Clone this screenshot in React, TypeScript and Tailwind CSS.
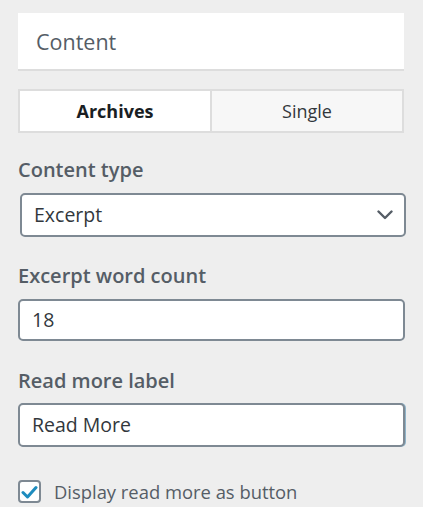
import { useState } from 'react'

const font = { fontFamily: '"Open Sans", "Noto Sans", sans-serif' }

function Label({ children, className = '' }: { children: React.ReactNode; className?: string }) {
  return (
    <div className={`h-6 text-[20px] leading-6 font-semibold text-[#555d66] ${className}`}>
      {children}
    </div>
  )
}

export default function App() {
  const [tab, setTab] = useState<'archives' | 'single'>('archives')
  const [checked, setChecked] = useState(true)

  return (
    <div className="min-h-[507px] w-[423px] bg-[#eeeeee] px-[18px] pt-[13px]" style={font}>
      {/* Section header */}
      <div className="flex h-[58px] w-[386px] items-center border-b-2 border-[#dddddd] bg-white pl-[18px] pt-[2px]">
        <span className="text-[21.5px] text-[#555d66]">Content</span>
      </div>

      {/* Tabs */}
      <div className="mt-[18px] flex h-[44px] w-[386px] border-2 border-[#dddddd]">
        <button
          onClick={() => setTab('archives')}
          className={`flex-1 border-r-2 border-[#dddddd] text-[18px] ${
            tab === 'archives' ? 'bg-white font-bold text-[#191e23]' : 'bg-[#f7f7f7] text-[#32373c]'
          }`}
        >
          Archives
        </button>
        <button
          onClick={() => setTab('single')}
          className={`flex-1 text-[18px] ${
            tab === 'single' ? 'bg-white font-bold text-[#191e23]' : 'bg-[#f7f7f7] text-[#32373c]'
          }`}
        >
          Single
        </button>
      </div>

      {/* Content type */}
      <Label className="mt-[25px]">Content type</Label>
      <div className="mt-[11px] ml-[2px] flex h-[44px] w-[386px] items-center justify-between rounded-[5px] border-2 border-[#7e8993] bg-white pl-[12px] pr-[11px]">
        <span className="text-[19.5px] text-[#32373c]">Excerpt</span>
        <svg width="16" height="10" viewBox="0 0 16 10" fill="none">
          <path d="M1.5 1.5 L8 8 L14.5 1.5" stroke="#555d66" strokeWidth="2.4" strokeLinecap="round" strokeLinejoin="round" />
        </svg>
      </div>

      {/* Excerpt word count */}
      <Label className="mt-[27px]">Excerpt word count</Label>
      <div className="mt-[11px] flex h-[42px] w-[387px] items-center rounded-[5px] border-2 border-[#7e8993] bg-white pl-[12px]">
        <span className="text-[19.5px] text-[#32373c]">18</span>
      </div>

      {/* Read more label */}
      <Label className="mt-[28px]">Read more label</Label>
      <div className="mt-[10px] flex h-[44px] w-[387px] items-center rounded-[5px] border-2 border-[#7e8993] bg-white pl-[12px] shadow-[1px_0_0_#8fb4c9]">
        <span className="text-[19.5px] text-[#32373c]">Read More</span>
      </div>

      {/* Checkbox */}
      <label className="mt-[31px] flex items-center gap-[13px] cursor-pointer">
        <span
          onClick={() => setChecked(!checked)}
          className="flex h-[23px] w-[23px] items-center justify-center rounded-[4px] border-2 border-[#7e8993] bg-white"
        >
          {checked && (
            <svg width="17" height="14" viewBox="0 0 17 14" fill="none">
              <path d="M2 7.5 L6.5 12 L15 2.5" stroke="#1e8cbe" strokeWidth="3" strokeLinecap="round" strokeLinejoin="round" />
            </svg>
          )}
        </span>
        <span className="text-[18.4px] text-[#555d66]">Display read more as button</span>
      </label>
    </div>
  )
}
